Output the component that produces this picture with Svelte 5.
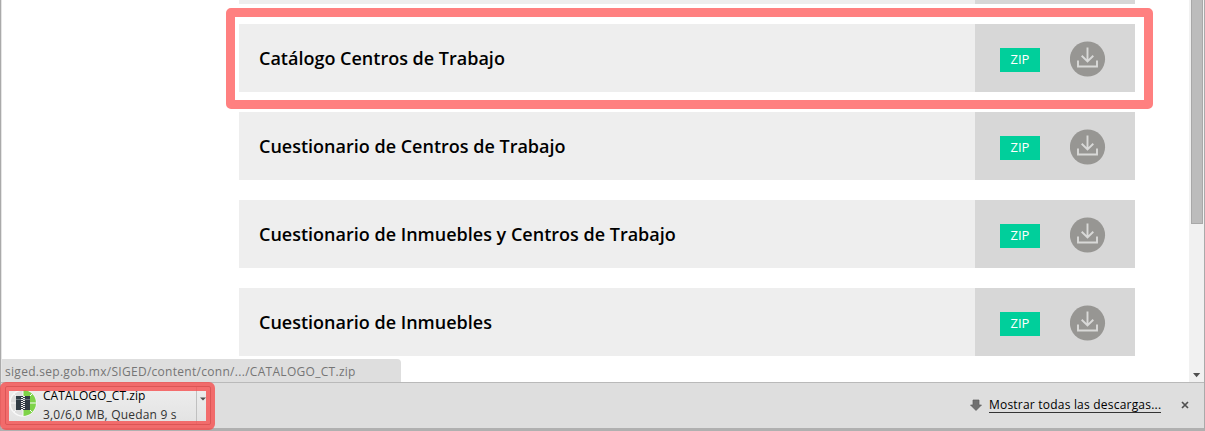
<script>
  const files = [
    '',
    'Catálogo Centros de Trabajo',
    'Cuestionario de Centros de Trabajo',
    'Cuestionario de Inmuebles y Centros de Trabajo',
    'Cuestionario de Inmuebles'
  ];
</script>

<div class="window">
  <div class="viewport">
    <main class="list">
      {#each files as name}
        <div class="row">
          <div class="name">{name}</div>
          <div class="actions">
            {#if name}
              <span class="badge">ZIP</span>
              <svg class="download" width="36" height="36" viewBox="0 0 36 36">
                <circle cx="17.5" cy="18" r="17.6" fill="#979693" />
                <path d="M17.5 6.5V20.5M11.7 14.8L17.5 20.5L23.3 14.8M8 19.5V25.5H27V19.5" fill="none" stroke="#d9d9d8" stroke-width="1.9" />
              </svg>
            {/if}
          </div>
        </div>
      {/each}
    </main>
    <div class="scrollbar">
      <div class="thumb"></div>
      <svg width="15" height="16" viewBox="0 0 15 16"><path d="M4 7H11.2L7.6 11.2Z" fill="#505050" /></svg>
    </div>
    <div class="status"><span>siged.sep.gob.mx/SIGED/content/conn/.../CATALOGO_CT.zip</span></div>
    <div class="mark"></div>
  </div>

  <footer class="shelf">
    <div class="item">
      <svg class="progress" width="28" height="28" viewBox="0 0 28 28">
        <circle cx="14" cy="14" r="13" fill="#dedede" stroke="#f8f8f8" stroke-width="1.4" />
        <path d="M14 1A13 13 0 0 1 14 27Z" fill="#7ed348" />
        <path d="M1 14H27M14 1V27M5 5L23 23M23 5L5 23" stroke="#f8f8f8" stroke-width="1" />
        <path d="M7 7H21V10H7ZM7 11H21V21H7Z" fill="#303b44" />
        <path d="M7 10H21V11H7Z" fill="#68737a" />
        <path d="M13 8V22" stroke="#eeeeee" stroke-width="2" stroke-dasharray="1 1" />
        <path d="M15 7V21" stroke="#eeeeee" stroke-width="2" stroke-dasharray="1 1" />
      </svg>
      <div class="details">
        <div class="filename">CATALOGO_CT.zip</div>
        <div class="remaining">3,0/6,0 MB, Quedan 9 s</div>
      </div>
      <div class="dropdown"><svg width="6" height="4" viewBox="0 0 6 4"><path d="M0 .5H6L3 3.5Z" fill="#505050" /></svg></div>
    </div>
    <div class="all">
      <svg width="12" height="12" viewBox="0 0 12 12"><path d="M3 1H9V6H11.5L6 11.5L.5 6H3Z" fill="#707070" stroke="#5c5c5c" stroke-width=".7" /></svg>
      <span class="link">Mostrar todas las descargas...</span>
      <svg class="close" width="8" height="8" viewBox="0 0 8 8"><path d="M1 1L7 7M7 1L1 7" stroke="#505050" stroke-width="1.7" /></svg>
    </div>
    <div class="download-mark"></div>
  </footer>
</div>

<style>
  :global(body) { margin: 0; overflow: hidden; }
  .window { box-sizing: border-box; width: 1205px; height: 431px; display: flex; flex-direction: column; background: #fff; border-left: 1px solid #aaa; border-right: 1px solid #aaa; border-bottom: 3px solid #b0b0b0; font-family: "Open Sans", sans-serif; color: #000; }
  .viewport { position: relative; height: 382px; display: flex; justify-content: space-between; overflow: hidden; box-sizing: border-box; border-left: 1px solid #e5e5e5; }
  .list { width: 896px; margin: -64px 0 0 237px; display: flex; flex-direction: column; gap: 20px; }
  .row { display: flex; height: 68px; flex: none; }
  .name { box-sizing: border-box; width: 736px; padding-left: 20px; background: #eee; font-size: 18px; font-weight: 600; line-height: 68px; white-space: nowrap; }
  .actions { box-sizing: border-box; width: 160px; padding-left: 25px; background: #d7d7d7; display: flex; }
  .badge { width: 40px; height: 24px; margin-top: 24px; background: #00cf9b; color: #fff; font-size: 13px; line-height: 23px; text-align: center; }
  .download { margin: 17px 0 0 30px; }
  .scrollbar { width: 15px; height: 382px; background: #f1f1f1; display: flex; flex-direction: column; justify-content: space-between; }
  .thumb { box-sizing: border-box; width: 12px; height: 224px; margin-left: 2px; background: #bcbcbc; border: 1px solid #a8a8a8; border-top: 0; }
  .status { position: absolute; left: -1px; bottom: 0; box-sizing: border-box; width: 400px; height: 23px; padding-left: 4px; background: #dedede; border-radius: 0 4px 0 0; color: #757575; font-size: 12px; line-height: 25px; letter-spacing: .29px; white-space: nowrap; }
  .mark { position: absolute; left: 224px; top: 8px; box-sizing: border-box; width: 927px; height: 101px; border: 9px solid #ff8080; border-radius: 5px; }
  .shelf { position: relative; box-sizing: border-box; height: 46px; display: flex; justify-content: space-between; background: #dedede; border-top: 1px solid #b9b9b9; }
  .item { box-sizing: border-box; width: 206px; height: 39px; margin: 3px 0 0 4px; display: flex; border: 1px solid #777; border-radius: 2px; background: linear-gradient(#eee, #e2e2e2); }
  .progress { flex: none; margin: 2px 0 0 3px; }
  .details { flex: none; width: 153px; margin-left: 6px; white-space: nowrap; font-size: 12px; }
  .filename { line-height: 18px; letter-spacing: .06px; }
  .remaining { line-height: 18px; margin-top: 1px; color: #333; letter-spacing: .19px; }
  .dropdown { flex: 1; display: flex; padding: 10px 0 0 3px; border-left: 1px solid #c0c0c0; }
  .all { display: flex; align-items: center; height: 44px; padding-right: 15px; }
  .link { margin-left: 7px; font-size: 12px; line-height: 16px; width: 172px; border-bottom: 1px solid #333; height: 15px; letter-spacing: .21px; white-space: nowrap; }
  .close { margin-left: 20px; }
  .download-mark { position: absolute; left: -1px; top: -1px; box-sizing: border-box; width: 215px; height: 48px; border: 9px solid rgba(245, 78, 78, .8); border-radius: 6px; }
</style>
